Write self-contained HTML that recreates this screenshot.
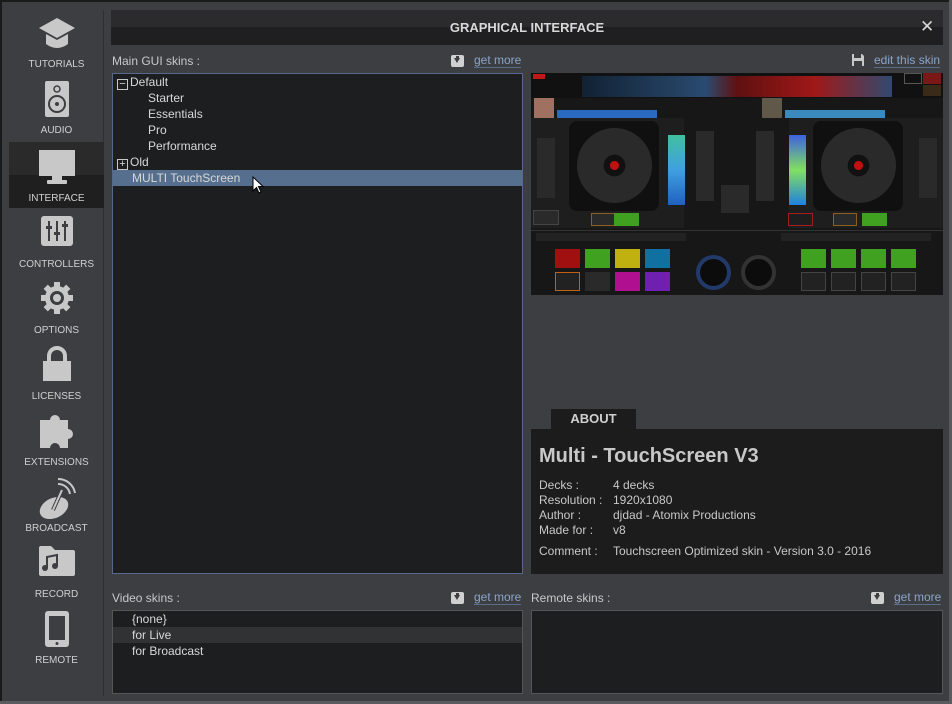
<!DOCTYPE html>
<html><head><meta charset="utf-8"><style>
*{margin:0;padding:0;box-sizing:border-box}
body{width:952px;height:704px;background:#3d3e42;font-family:"Liberation Sans",sans-serif;position:relative;overflow:hidden;color:#c8c8c8}
.abs{position:absolute}
.nav{position:absolute;left:9px;width:95px;height:66px;text-align:center;font-size:10px;color:#d0d0d0}
.nav span{position:absolute;left:0;right:0;bottom:4px}
.nav svg{position:absolute;left:50%;transform:translateX(-50%);top:6px}
.lbl{font-size:12px;color:#c8c8c8}
.gm{font-size:12px;color:#8aa4c8;border-bottom:1px solid #5a6e8a;line-height:13px}
.dl{width:13px;height:12px;background:#d0d0d0;border-radius:2px}
.dl:after{content:"";position:absolute;left:3px;top:3px;border-left:3.5px solid transparent;border-right:3.5px solid transparent;border-top:5px solid #3d3e42}
.dl:before{content:"";position:absolute;left:5px;top:1px;width:3px;height:3px;background:#3d3e42}
.list{background:#1d1e20;border:1px solid #56698a}
.it{font-size:12px;color:#d8d8d8;height:16px;line-height:16px;white-space:nowrap}
.p{position:absolute;background:#2a2a2b}
</style></head><body>
<div class="abs" style="left:0;top:0;width:952px;height:2px;background:#1a1a1a"></div>
<div class="abs" style="left:0;top:0;width:2px;height:704px;background:#1a1a1a"></div>
<div class="abs" style="left:949px;top:0;width:3px;height:704px;background:#5a5b5f"></div>
<div class="abs" style="left:0;top:701px;width:952px;height:3px;background:#5a5b5f"></div>
<div class="abs" style="left:103px;top:10px;width:1px;height:686px;background:#2e2f33"></div>

<div class="nav" style="top:8px"><svg width="40" height="40" viewBox="0 0 40 40"><path d="M20 4 L38 14 L20 24 L2 14Z" fill="#c8c8c8"/><path d="M9 20 V30 Q20 38 31 30 V20 L20 26Z" fill="#c8c8c8"/></svg><span>TUTORIALS</span></div>
<div class="nav" style="top:74px"><svg width="26" height="38" viewBox="0 0 26 38"><rect x="1" y="1" width="24" height="36" rx="2" fill="#c8c8c8"/><circle cx="13" cy="9" r="3" fill="none" stroke="#3d3e42" stroke-width="1.5"/><circle cx="13" cy="24" r="8" fill="none" stroke="#3d3e42" stroke-width="2"/><circle cx="13" cy="24" r="2" fill="#3d3e42"/></svg><span>AUDIO</span></div>
<div class="nav" style="top:142px;background:#1f1f20;height:66px"><div class="abs" style="left:0;top:0;width:95px;height:33px;background:#2a2a2b"></div><svg width="38" height="38" viewBox="0 0 38 38"><rect x="1" y="2" width="36" height="26" fill="#c8c8c8"/><rect x="14" y="28" width="10" height="4" fill="#c8c8c8"/><rect x="9" y="32" width="20" height="4" rx="1" fill="#c8c8c8"/></svg><span>INTERFACE</span></div>
<div class="nav" style="top:208px"><svg width="32" height="32" viewBox="0 0 32 32"><rect x="0" y="2" width="32" height="30" rx="3" fill="#c8c8c8"/><path d="M8 7V27M16 7V27M24 7V27" stroke="#3d3e42" stroke-width="2"/><rect x="5" y="12" width="6" height="3" fill="#3d3e42"/><rect x="13" y="18" width="6" height="3" fill="#3d3e42"/><rect x="21" y="10" width="6" height="3" fill="#3d3e42"/></svg><span>CONTROLLERS</span></div>
<div class="nav" style="top:274px"><svg width="36" height="36" viewBox="0 0 36 36"><circle cx="18" cy="18" r="12" fill="#c8c8c8"/><g stroke="#c8c8c8" stroke-width="6"><path d="M18 2V34M2 18H34M6.7 6.7L29.3 29.3M29.3 6.7L6.7 29.3"/></g><circle cx="18" cy="18" r="7" fill="#3d3e42"/><circle cx="18" cy="18" r="4" fill="#c8c8c8"/></svg><span>OPTIONS</span></div>
<div class="nav" style="top:340px"><svg width="30" height="36" viewBox="0 0 30 36"><path d="M7 16V10a8 8 0 0 1 16 0v6" fill="none" stroke="#c8c8c8" stroke-width="4"/><rect x="1" y="15" width="28" height="20" fill="#c8c8c8"/></svg><span>LICENSES</span></div>
<div class="nav" style="top:406px"><svg width="42" height="40" viewBox="0 0 42 40"><path d="M4 8H14a5 5 0 1 1 10 0H32V17a5 5 0 1 1 0 10V36H24a5 5 0 1 0-10 0H4Z" fill="#c8c8c8"/></svg><span>EXTENSIONS</span></div>
<div class="nav" style="top:472px"><svg width="42" height="42" viewBox="0 0 42 42"><ellipse cx="18" cy="30" rx="15" ry="10" fill="#c8c8c8" transform="rotate(-25 18 30)"/><path d="M17 32L26 12" stroke="#3d3e42" stroke-width="4"/><path d="M17 32L26 12" stroke="#c8c8c8" stroke-width="2"/><path d="M22 6a12 12 0 0 1 12 10M22 1a17 17 0 0 1 17 14" fill="none" stroke="#c8c8c8" stroke-width="2"/></svg><span>BROADCAST</span></div>
<div class="nav" style="top:538px"><svg width="40" height="34" viewBox="0 0 40 34"><path d="M2 4a2 2 0 0 1 2-2H14l4 4H36a2 2 0 0 1 2 2V30a2 2 0 0 1-2 2H4a2 2 0 0 1-2-2Z" fill="#c8c8c8"/><path d="M10 24V13L20 11V22" fill="none" stroke="#3d3e42" stroke-width="2"/><circle cx="8" cy="24" r="3" fill="#3d3e42"/><circle cx="18" cy="22" r="3" fill="#3d3e42"/></svg><span>RECORD</span></div>
<div class="nav" style="top:604px"><svg width="26" height="38" viewBox="0 0 26 38"><rect x="1" y="1" width="24" height="36" rx="3" fill="#c8c8c8"/><rect x="5" y="6" width="16" height="24" fill="#3d3e42"/><circle cx="13" cy="33.5" r="1.5" fill="#3d3e42"/></svg><span>REMOTE</span></div>

<div class="abs" style="left:111px;top:10px;width:832px;height:17px;background:#2b2b2d"></div>
<div class="abs" style="left:111px;top:27px;width:832px;height:18px;background:#1f1f21"></div>
<div class="abs" style="left:111px;top:20px;width:832px;text-align:center;font-size:13px;font-weight:bold;color:#d8d8d8">GRAPHICAL INTERFACE</div>
<div class="abs" style="left:920px;top:17px;font-size:17px;color:#d8d8d8">✕</div>

<div class="abs lbl" style="left:112px;top:54px">Main GUI skins :</div>
<div class="abs dl" style="left:451px;top:55px"></div>
<div class="abs gm" style="left:474px;top:54px">get more</div>
<div class="abs list" style="left:112px;top:73px;width:411px;height:501px">
<div class="it" style="padding-left:4px;"><span style="display:inline-block;width:11px;height:11px;border:1px solid #c8c8c8;vertical-align:-1px;text-align:center;line-height:8px;font-size:11px;margin-right:2px">−</span>Default</div>
<div class="it" style="padding-left:35px">Starter</div>
<div class="it" style="padding-left:35px">Essentials</div>
<div class="it" style="padding-left:35px">Pro</div>
<div class="it" style="padding-left:35px">Performance</div>
<div class="it" style="padding-left:4px;"><span style="display:inline-block;width:11px;height:11px;border:1px solid #c8c8c8;vertical-align:-1px;text-align:center;line-height:9px;font-size:11px;margin-right:2px">+</span>Old</div>
<div class="it" style="padding-left:19px;background:#566f8e">MULTI TouchScreen</div>
</div>
<svg class="abs" style="left:252px;top:176px" width="12" height="18" viewBox="0 0 12 18"><path d="M1 1V15L4.5 11.5L7 17L9 16L6.5 10.5H11Z" fill="#fff" stroke="#000" stroke-width="1"/></svg>

<svg class="abs" style="left:851px;top:53px" width="14" height="14" viewBox="0 0 14 14"><path d="M1 1H11L13 3V13H1Z" fill="#c8c8c8"/><rect x="3" y="1" width="7" height="4" fill="#3d3e42"/><rect x="3" y="8" width="8" height="5" fill="#3d3e42"/></svg>
<div class="abs gm" style="left:874px;top:54px">edit this skin</div>

<div class="abs" style="left:531px;top:73px;width:412px;height:222px;background:#171718;overflow:hidden">
 <div class="abs" style="left:0;top:0;width:412px;height:25px;background:#111"></div>
 <div class="abs" style="left:2px;top:1px;width:12px;height:5px;background:#c01818"></div>
 <div class="abs" style="left:51px;top:3px;width:310px;height:21px;background:linear-gradient(90deg,#123 0,#2a4a70 40%,#601010 50%,#a01818 75%,#304a70 100%)"></div>
 <div class="abs" style="left:373px;top:0;width:18px;height:11px;border:1px solid #555"></div>
 <div class="abs" style="left:392px;top:0;width:18px;height:11px;background:#7a1818"></div>
 <div class="abs" style="left:392px;top:12px;width:18px;height:11px;background:#3a2a18"></div>
 <div class="p" style="left:0;top:45px;width:153px;height:110px;background:#1e1e1f"></div>
 <div class="p" style="left:258px;top:45px;width:154px;height:110px;background:#1e1e1f"></div>
 <div class="p" style="left:3px;top:25px;width:20px;height:20px;background:#a07060"></div>
 <div class="p" style="left:26px;top:37px;width:100px;height:8px;background:#2a6ac0"></div>
 <div class="p" style="left:254px;top:37px;width:100px;height:8px;background:#3a8ac0"></div>
 <div class="p" style="left:231px;top:25px;width:20px;height:20px;background:#605848"></div>
 <div class="p" style="left:6px;top:65px;width:18px;height:60px"></div>
 <div class="p" style="left:388px;top:65px;width:18px;height:60px"></div>
 <div class="p" style="left:38px;top:48px;width:90px;height:90px;background:#101010;border-radius:8px"></div>
 <div class="p" style="left:282px;top:48px;width:90px;height:90px;background:#101010;border-radius:8px"></div>
 <div class="abs" style="left:46px;top:55px;width:75px;height:75px;border-radius:50%;background:radial-gradient(circle,#c01010 0 8%,#111 9% 20%,#2a2a2a 21% 100%)"></div>
 <div class="abs" style="left:290px;top:55px;width:75px;height:75px;border-radius:50%;background:radial-gradient(circle,#c01010 0 8%,#111 9% 20%,#2a2a2a 21% 100%)"></div>
 <div class="abs" style="left:137px;top:62px;width:17px;height:70px;background:linear-gradient(#40c0a0,#40a0e0,#2060c0)"></div>
 <div class="abs" style="left:258px;top:62px;width:17px;height:70px;background:linear-gradient(#4060e0,#80e060,#2080e0)"></div>
 <div class="p" style="left:165px;top:58px;width:18px;height:70px"></div>
 <div class="p" style="left:225px;top:58px;width:18px;height:70px"></div>
 <div class="p" style="left:190px;top:112px;width:28px;height:28px"></div>
 <div class="p" style="left:2px;top:137px;width:26px;height:15px;border:1px solid #444"></div>
 <div class="abs" style="left:60px;top:140px;width:24px;height:13px;background:#2a2a2a;border:1px solid #8a6020"></div>
 <div class="abs" style="left:83px;top:140px;width:25px;height:13px;background:#40a020"></div>
 <div class="abs" style="left:302px;top:140px;width:24px;height:13px;background:#2a2a2a;border:1px solid #8a6020"></div>
 <div class="abs" style="left:331px;top:140px;width:25px;height:13px;background:#40a020"></div>
 <div class="abs" style="left:257px;top:140px;width:25px;height:13px;border:1px solid #a02020"></div>
 <div class="abs" style="left:0;top:157px;width:412px;height:1px;background:#333"></div>
 <div class="p" style="left:5px;top:160px;width:150px;height:8px;background:#222"></div>
 <div class="p" style="left:250px;top:160px;width:150px;height:8px;background:#222"></div>
 <div class="abs" style="left:24px;top:176px;width:25px;height:19px;background:#a01010"></div>
 <div class="abs" style="left:54px;top:176px;width:25px;height:19px;background:#40a020"></div>
 <div class="abs" style="left:84px;top:176px;width:25px;height:19px;background:#c0b010"></div>
 <div class="abs" style="left:114px;top:176px;width:25px;height:19px;background:#1070a0"></div>
 <div class="abs" style="left:24px;top:199px;width:25px;height:19px;border:1px solid #c06010;background:#222"></div>
 <div class="abs" style="left:54px;top:199px;width:25px;height:19px;background:#2a2a2a"></div>
 <div class="abs" style="left:84px;top:199px;width:25px;height:19px;background:#b01090"></div>
 <div class="abs" style="left:114px;top:199px;width:25px;height:19px;background:#7020b0"></div>
 <div class="abs" style="left:165px;top:182px;width:35px;height:35px;border-radius:50%;background:#0c0c0c;border:4px solid #223a6a"></div>
 <div class="abs" style="left:210px;top:182px;width:35px;height:35px;border-radius:50%;background:#0c0c0c;border:4px solid #333"></div>
 <div class="abs" style="left:270px;top:176px;width:25px;height:19px;background:#40a020"></div>
 <div class="abs" style="left:300px;top:176px;width:25px;height:19px;background:#40a020"></div>
 <div class="abs" style="left:330px;top:176px;width:25px;height:19px;background:#40a020"></div>
 <div class="abs" style="left:360px;top:176px;width:25px;height:19px;background:#40a020"></div>
 <div class="abs" style="left:270px;top:199px;width:25px;height:19px;background:#222;border:1px solid #444"></div>
 <div class="abs" style="left:300px;top:199px;width:25px;height:19px;background:#222;border:1px solid #444"></div>
 <div class="abs" style="left:330px;top:199px;width:25px;height:19px;background:#222;border:1px solid #444"></div>
 <div class="abs" style="left:360px;top:199px;width:25px;height:19px;background:#222;border:1px solid #444"></div>
</div>

<div class="abs" style="left:551px;top:409px;width:85px;height:20px;background:#1c1c1c;color:#d0d0d0;font-size:13px;font-weight:bold;text-align:center;line-height:20px">ABOUT</div>
<div class="abs" style="left:531px;top:429px;width:412px;height:145px;background:#1c1c1c;font-size:12px;color:#c8c8c8">
 <div class="abs" style="left:8px;top:16px;font-size:20px;font-weight:bold;color:#c8c8c8">Multi - TouchScreen V3</div>
 <div class="abs" style="left:8px;top:49px;line-height:15px">Decks :<br>Resolution :<br>Author :<br>Made for :</div>
 <div class="abs" style="left:82px;top:49px;line-height:15px">4 decks<br>1920x1080<br>djdad - Atomix Productions<br>v8</div>
 <div class="abs" style="left:8px;top:115px">Comment :</div>
 <div class="abs" style="left:82px;top:115px">Touchscreen Optimized skin - Version 3.0 - 2016</div>
</div>

<div class="abs lbl" style="left:112px;top:591px">Video skins :</div>
<div class="abs dl" style="left:451px;top:592px"></div>
<div class="abs gm" style="left:474px;top:591px">get more</div>
<div class="abs list" style="left:112px;top:610px;width:411px;height:84px;border-color:#555">
 <div class="it" style="padding-left:19px">{none}</div>
 <div class="it" style="padding-left:19px;background:#313234">for Live</div>
 <div class="it" style="padding-left:19px">for Broadcast</div>
</div>

<div class="abs lbl" style="left:531px;top:591px">Remote skins :</div>
<div class="abs dl" style="left:871px;top:592px"></div>
<div class="abs gm" style="left:894px;top:591px">get more</div>
<div class="abs list" style="left:531px;top:610px;width:412px;height:84px;border-color:#555"></div>
</body></html>
